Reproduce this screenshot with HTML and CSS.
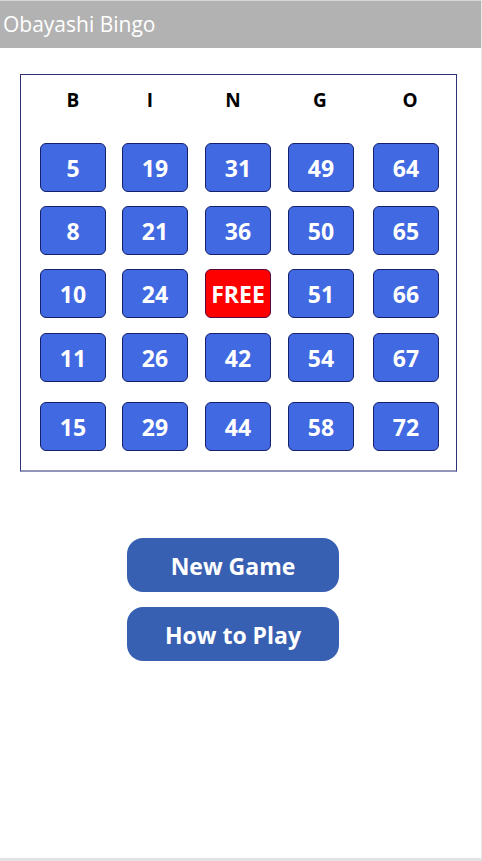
FILE: index.html
```html
<!DOCTYPE html>
<html lang="en">
<head>
<meta charset="utf-8">
<title>Obayashi Bingo</title>
<link rel="stylesheet" href="styles.css">
</head>
<body>
<div class="screen">
  <header class="topbar">Obayashi Bingo</header>
  <main class="content">
    <section class="card">
      <div class="letters">
        <span>B</span><span>I</span><span>N</span><span>G</span><span>O</span>
      </div>
      <div class="grid">
        <div class="cell">5</div><div class="cell">19</div><div class="cell">31</div><div class="cell">49</div><div class="cell">64</div>
        <div class="cell">8</div><div class="cell">21</div><div class="cell">36</div><div class="cell">50</div><div class="cell">65</div>
        <div class="cell">10</div><div class="cell">24</div><div class="cell free">FREE</div><div class="cell">51</div><div class="cell">66</div>
        <div class="cell">11</div><div class="cell">26</div><div class="cell">42</div><div class="cell">54</div><div class="cell">67</div>
        <div class="cell">15</div><div class="cell">29</div><div class="cell">44</div><div class="cell">58</div><div class="cell">72</div>
      </div>
    </section>
    <div class="actions">
      <button class="btn">New Game</button>
      <button class="btn">How to Play</button>
    </div>
  </main>
</div>
<div class="bottombar"></div>
</body>
</html>
```
FILE: styles.css
```css
html, body {
  margin: 0;
  padding: 0;
  background: #ffffff;
  font-family: "Open Sans", "Noto Sans", sans-serif;
}

.screen {
  width: 481px;
  height: 858px;
  border-right: 1px solid #e6e6e6;
  box-sizing: content-box;
  display: flex;
  flex-direction: column;
}

.topbar {
  height: 48px;
  box-sizing: border-box;
  border-top: 1px solid #d6d6d6;
  background: #b2b2b2;
  color: #ffffff;
  font-size: 21px;
  line-height: 46px;
  padding-left: 3px;
}

.content {
  flex: 1;
  padding-top: 26px;
}

.card {
  margin-left: 20px;
  width: 437px;
  height: 398px;
  box-sizing: border-box;
  border: 1px solid #2e3275;
  border-bottom: 2px solid #9195b8;
  padding: 13px 0 0 19px;
}

.letters {
  display: grid;
  grid-template-columns: 77px 83px 87px 90px 66px;
  height: 24px;
  font-weight: 700;
  font-size: 19px;
  line-height: 24px;
  color: #000;
}

.letters span {
  width: 66px;
  text-align: center;
}

.grid {
  margin-top: 31px;
  display: grid;
  grid-template-columns: 82px 83px 83px 85px 66px;
  grid-template-rows: 63px 63px 64px 69px 49px;
}

.cell {
  width: 66px;
  height: 49px;
  box-sizing: border-box;
  background: #4169e1;
  border: 1px solid #16206a;
  border-radius: 6px;
  color: #ffffff;
  font-weight: 700;
  font-size: 23px;
  display: flex;
  align-items: center;
  justify-content: center;
}

.cell.free {
  background: #ff0000;
  border-color: #5a0a3a;
}

.actions {
  margin-top: 66px;
  margin-left: 127px;
  display: flex;
  flex-direction: column;
  gap: 15px;
}

.btn {
  width: 212px;
  height: 54px;
  border: none;
  border-radius: 16px;
  background: #3860b2;
  color: #ffffff;
  font-family: "Open Sans", "Noto Sans", sans-serif;
  font-weight: 700;
  font-size: 23px;
  padding: 2px 0 0;
}

.bottombar {
  height: 3px;
  background: #e3e3e3;
}
```
